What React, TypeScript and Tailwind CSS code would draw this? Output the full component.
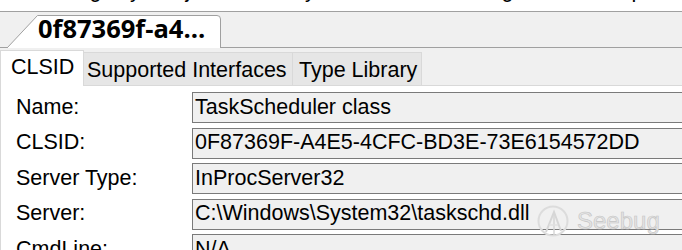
import React from 'react';

const rows: [string, string][] = [
    ['Name:', 'TaskScheduler class'],
    ['CLSID:', '0F87369F-A4E5-4CFC-BD3E-73E6154572DD'],
    ['Server Type:', 'InProcServer32'],
    ['Server:', 'C:\\Windows\\System32\\taskschd.dll'],
    ['CmdLine:', 'N/A'],
];

const sans = { fontFamily: '"Liberation Sans", Arial, sans-serif' };

function DocTab() {
    return (
        <div className="relative h-[33px] w-[214px] shrink-0">
            <svg className="absolute inset-0" width="214" height="33" viewBox="0 0 214 33">
                <path
                    d="M0 33 L30.5 0.5 L210 0.5 Q213.5 0.5 213.5 4 L213.5 33"
                    fill="#ffffff"
                    stroke="#a0a0a0"
                    strokeWidth="1"
                />
            </svg>
            <div
                className="relative pl-[31px] pt-[1px] text-[25.5px] font-bold leading-none text-black"
                style={{ fontFamily: '"Open Sans", "Noto Sans", sans-serif' }}
            >
                0f87369f-a4...
            </div>
        </div>
    );
}

function Watermark() {
    return (
        <div className="absolute left-[537px] top-[205px] flex items-center gap-[6px]">
            <svg width="34" height="32" viewBox="0 0 34 32">
                <circle cx="16" cy="16" r="14.5" fill="none" stroke="#dcdcdc" strokeWidth="2" />
                <path d="M9 27 L17 7 L24 26" fill="none" stroke="#d6d6d6" strokeWidth="2" />
                <path d="M17 7 L17 30" fill="none" stroke="#d6d6d6" strokeWidth="1.5" />
                <path d="M12 20 L21 20" fill="none" stroke="#e0e0e0" strokeWidth="1.5" />
            </svg>
            <span
                className="text-[24px] leading-none text-[#e4e4e4]"
                style={{ ...sans, WebkitTextStroke: '0.6px #c4c4c4' }}
            >
                Seebug
            </span>
        </div>
    );
}

export default function App() {
    return (
        <div className="relative flex h-[250px] w-[682px] flex-col overflow-hidden bg-[#f0f0f0]" style={sans}>
            {/* clipped menu line */}
            <div className="h-[12px] shrink-0 overflow-hidden border-b border-[#a0a0a0] bg-white">
                <div className="-mt-[20px] flex whitespace-nowrap text-[21.5px] leading-none text-black">
                    <span className="ml-[62px]">Registry</span>
                    <span className="ml-[16px]">Object</span>
                    <span className="ml-[19px]">Security</span>
                    <span className="ml-[17px]">Processes</span>
                    <span className="ml-[17px]">Storage</span>
                    <span className="ml-[74px]">Help</span>
                </div>
            </div>

            {/* document tab strip */}
            <div className="flex h-[36px] shrink-0 items-end">
                <div className="w-[7px] shrink-0 border-b border-[#a0a0a0]" />
                <DocTab />
                <div className="flex-1 border-b border-[#a0a0a0]" />
            </div>

            {/* inner tabs */}
            <div className="mt-[2px] flex h-[36px] shrink-0 items-end whitespace-nowrap text-[21.5px] leading-none text-black">
                <div className="flex h-[36px] w-[84px] shrink-0 items-start border-l border-r border-t border-[#d9d9d9] bg-white pl-[10px] pt-[6px]">
                    CLSID
                </div>
                <div className="flex h-[34px] w-[209px] shrink-0 items-start border-b border-r border-t border-[#d9d9d9] bg-[#e6e6e6] pl-[3px] pt-[7px]">
                    Supported Interfaces
                </div>
                <div className="flex h-[34px] w-[129px] shrink-0 items-start border-b border-r border-t border-[#d9d9d9] bg-[#e6e6e6] pl-[6px] pt-[7px]">
                    Type Library
                </div>
                <div className="flex-1 border-b border-[#d9d9d9]" />
            </div>

            {/* page */}
            <div className="flex shrink-0 flex-col gap-[4.5px] border-l border-[#d9d9d9] bg-white pb-[20px] pl-[15px] pt-[6px] text-[21.5px] leading-none text-black">
                {rows.map(([label, value]) => (
                    <div key={label} className="flex h-[31px] shrink-0 items-center whitespace-nowrap">
                        <div className="w-[176px] shrink-0">{label}</div>
                        <div className="flex h-[31px] w-[540px] shrink-0 items-center border border-[#7a7a7a] bg-[#f0f0f0] pl-[2px]">
                            {value}
                        </div>
                    </div>
                ))}
            </div>

            <Watermark />
        </div>
    );
}
